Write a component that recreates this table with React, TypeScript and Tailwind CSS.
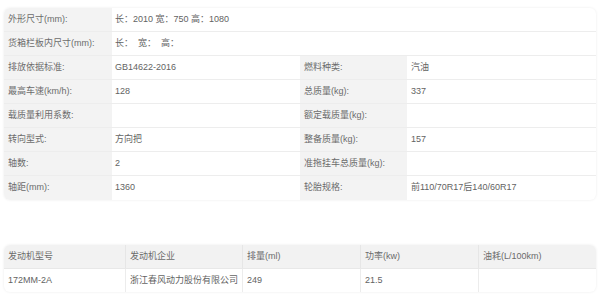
const font = { fontFamily: '"Liberation Sans", "Noto Sans CJK SC", sans-serif' };

type Cell = { label: string; value: string };

const fullRows: Cell[] = [
  { label: "外形尺寸(mm):", value: "长：2010 宽：750 高：1080" },
  { label: "货箱栏板内尺寸(mm):", value: "长：  宽：  高：" },
];

const pairRows: [Cell, Cell][] = [
  [{ label: "排放依据标准:", value: "GB14622-2016" }, { label: "燃料种类:", value: "汽油" }],
  [{ label: "最高车速(km/h):", value: "128" }, { label: "总质量(kg):", value: "337" }],
  [{ label: "载质量利用系数:", value: "" }, { label: "额定载质量(kg):", value: "" }],
  [{ label: "转向型式:", value: "方向把" }, { label: "整备质量(kg):", value: "157" }],
  [{ label: "轴数:", value: "2" }, { label: "准拖挂车总质量(kg):", value: "" }],
  [{ label: "轴距(mm):", value: "1360" }, { label: "轮胎规格:", value: "前110/70R17后140/60R17" }],
];

const engineHead = ["发动机型号", "发动机企业", "排量(ml)", "功率(kw)", "油耗(L/100km)"];
const engineRow = ["172MM-2A", "浙江春风动力股份有限公司", "249", "21.5", ""];

export default function App() {
  return (
    <div className="w-[600px] h-[299px] bg-white pt-2 pl-1 text-[9px] text-[#6b6b6b]" style={font}>
      <div className="w-[592px] rounded-md overflow-hidden shadow-[0_0_3px_rgba(0,0,0,0.08)] bg-white">
        {fullRows.map((r, i) => (
          <div key={i} className="grid grid-cols-[108px_1fr] h-6 border-b border-[#ededed]">
            <div className="bg-[#f3f3f3] flex items-center px-1">{r.label}</div>
            <div className="flex items-center px-[3px] text-[#636363] whitespace-pre">{r.value}</div>
          </div>
        ))}
        {pairRows.map(([a, b], i) => (
          <div
            key={i}
            className={`grid grid-cols-[108px_188px_107px_1fr] h-6 ${i < pairRows.length - 1 ? "border-b border-[#ededed]" : ""}`}
          >
            <div className="bg-[#f3f3f3] flex items-center px-1">{a.label}</div>
            <div className="flex items-center px-[3px] text-[#636363]">{a.value}</div>
            <div className="bg-[#f3f3f3] flex items-center px-1">{b.label}</div>
            <div className="flex items-center px-1 text-[#636363]">{b.value}</div>
          </div>
        ))}
      </div>

      <div className="mt-[45px] w-[592px] rounded-md overflow-hidden shadow-[0_0_3px_rgba(0,0,0,0.08)] bg-white">
        <div className="grid grid-cols-[121px_117px_118px_118px_1fr] h-6 bg-[#f2f2f2] border-b border-[#e8e8e8]">
          {engineHead.map((h, i) => (
            <div key={i} className={`flex items-center px-1 ${i > 0 ? "border-l border-[#e6e6e6]" : ""}`}>{h}</div>
          ))}
        </div>
        <div className="grid grid-cols-[121px_117px_118px_118px_1fr] h-[23px]">
          {engineRow.map((v, i) => (
            <div key={i} className={`flex items-center px-1 text-[#636363] ${i > 0 ? "border-l border-[#ececec]" : ""}`}>{v}</div>
          ))}
        </div>
      </div>
    </div>
  );
}
